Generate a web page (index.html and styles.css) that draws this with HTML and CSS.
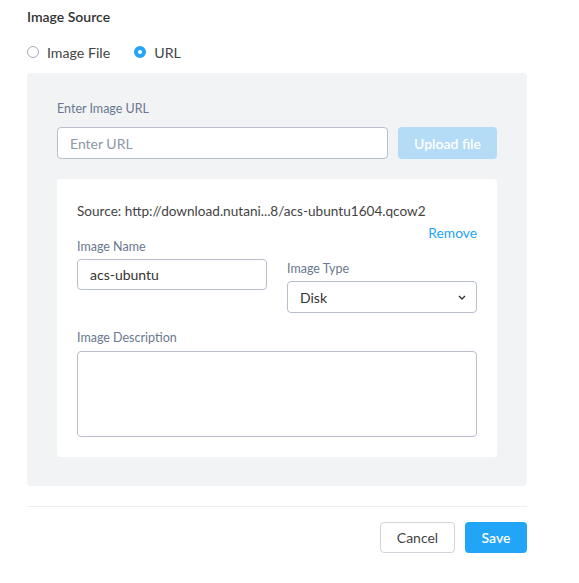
FILE: index.html
```html
<!DOCTYPE html>
<html lang="en">
<head>
    <meta charset="UTF-8">
    <meta name="viewport" content="width=device-width, initial-scale=1.0">
    <title>Image Source</title>
    <link rel="stylesheet" href="styles.css">
</head>
<body>
    <div class="form">
        <h3 class="section-title">Image Source</h3>
        <div class="radios">
            <label class="radio"><span class="dot"></span>Image File</label>
            <label class="radio"><span class="dot checked"></span>URL</label>
        </div>

        <div class="panel">
            <p class="label url-label">Enter Image URL</p>
            <div class="url-row">
                <input type="text" class="field url-input" placeholder="Enter URL">
                <button class="btn upload">Upload file</button>
            </div>

            <div class="card">
                <p class="source">Source: http://download.nutani...8/acs-ubuntu1604.qcow2</p>
                <div class="remove-row"><a class="remove">Remove</a></div>
                <div class="fields">
                    <div class="col">
                        <p class="label">Image Name</p>
                        <input type="text" class="field" value="acs-ubuntu">
                    </div>
                    <div class="col col-type">
                        <p class="label">Image Type</p>
                        <div class="field select">
                            <span>Disk</span>
                            <svg width="8" height="5" viewBox="0 0 8 5"><path d="M1 1l3 3 3-3" fill="none" stroke="#333" stroke-width="1.4"/></svg>
                        </div>
                    </div>
                </div>
                <p class="label">Image Description</p>
                <textarea class="field description"></textarea>
            </div>
        </div>

        <div class="footer">
            <button class="btn cancel">Cancel</button>
            <button class="btn save">Save</button>
        </div>
    </div>
</body>
</html>
```

FILE: styles.css
```css
body {
    font-family: Lato, "Open Sans", sans-serif;
    background-color: #ffffff;
    margin: 0;
    padding: 0;
    color: #333;
}

.form {
    width: 500px;
    padding: 8px 0 0 27px;
}

.section-title {
    margin: 0;
    font-size: 14px;
    font-weight: 600;
    color: #333;
    line-height: 18px;
}

.radios {
    display: flex;
    gap: 24px;
    margin-top: 17px;
    height: 18px;
    align-items: center;
}

.radio {
    display: flex;
    align-items: center;
    font-size: 14.2px;
    color: #444;
}

.dot {
    width: 10px;
    height: 10px;
    border: 1px solid #a2abb8;
    border-radius: 50%;
    margin-right: 8px;
    box-sizing: content-box;
}

.dot.checked {
    border: 4px solid #22a5f7;
    width: 4px;
    height: 4px;
    background: #fff;
}

.panel {
    background-color: #f2f3f5;
    border-radius: 4px;
    margin-top: 12px;
    padding: 29px 30px 30px;
    height: 413px;
    box-sizing: border-box;
}

.label {
    margin: 0 0 5px;
    font-size: 12.5px;
    color: #6a7890;
    line-height: 14px;
}

.url-label {
    margin-bottom: 11px;
}

.url-row {
    display: flex;
    gap: 10px;
}

.field {
    box-sizing: border-box;
    border: 1px solid #b8bfca;
    border-radius: 4px;
    background: #fff;
    font-family: inherit;
    font-size: 14px;
    color: #333;
    height: 32px;
    padding: 0 12px;
    outline: none;
}

.url-input {
    width: 331px;
}

.url-input::placeholder {
    color: #8e98a8;
}

.btn {
    font-family: inherit;
    font-size: 14px;
    border-radius: 4px;
    height: 32px;
    border: none;
    cursor: pointer;
}

.upload {
    width: 99px;
    background-color: #b4dcf6;
    color: #fff;
    font-weight: 600;
}

.card {
    background: #fff;
    border-radius: 3px;
    margin-top: 20px;
    padding: 23px 20px 20px;
}

.source {
    margin: 0;
    font-size: 13.6px;
    color: #444;
    line-height: 18px;
}

.remove-row {
    display: flex;
    justify-content: flex-end;
    margin-top: 5px;
}

.remove {
    font-size: 13.8px;
    color: #22a5f7;
    line-height: 16px;
}

.fields {
    display: flex;
    gap: 20px;
    margin-top: -1px;
}

.col .field {
    width: 190px;
    height: 31px;
}

.col-type {
    padding-top: 22px;
}

.col-type .field {
    height: 32px;
}

.select {
    display: flex;
    align-items: center;
    justify-content: space-between;
    padding: 0 10px 0 12px;
}

.card > .label {
    margin-top: 18px;
    margin-bottom: 6px;
}

.description {
    display: block;
    width: 400px;
    height: 86px;
    resize: none;
}

.footer {
    border-top: 1px solid #eceef1;
    margin-top: 20px;
    padding-top: 15px;
    display: flex;
    justify-content: flex-end;
    gap: 10px;
}

.cancel {
    background: #fff;
    border: 1px solid #d0d5dc;
    color: #444;
    width: 75px;
    height: 31px;
}

.save {
    background-color: #22a5f7;
    color: #fff;
    font-weight: 600;
    width: 62px;
    height: 31px;
}
```
